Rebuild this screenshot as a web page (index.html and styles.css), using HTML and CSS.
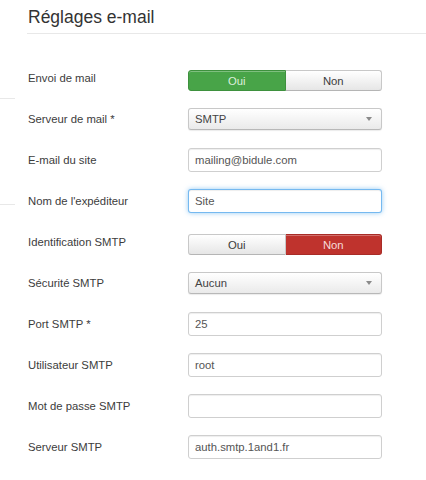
FILE: index.html
```html
<!DOCTYPE html>
<html lang="fr">
<head>
<meta charset="utf-8">
<title>Réglages e-mail</title>
<link rel="stylesheet" href="styles.css">
</head>
<body>
<div class="page">
  <aside class="side">
    <div class="side-line first"></div>
    <div class="side-line second"></div>
  </aside>
  <main class="main">
    <h2 class="title">Réglages e-mail</h2>
    <div class="form">
      <div class="row">
        <label class="lbl">Envoi de mail</label>
        <div class="toggle"><span class="tbtn yes">Oui</span><span class="tbtn">Non</span></div>
      </div>
      <div class="row">
        <label class="lbl">Serveur de mail *</label>
        <div class="select"><span>SMTP</span><span class="caret"></span></div>
      </div>
      <div class="row">
        <label class="lbl">E-mail du site</label>
        <input class="inp" type="text" value="mailing@bidule.com">
      </div>
      <div class="row">
        <label class="lbl">Nom de l'expéditeur</label>
        <input class="inp focus" type="text" value="Site">
      </div>
      <div class="row">
        <label class="lbl">Identification SMTP</label>
        <div class="toggle"><span class="tbtn">Oui</span><span class="tbtn no">Non</span></div>
      </div>
      <div class="row">
        <label class="lbl">Sécurité SMTP</label>
        <div class="select"><span>Aucun</span><span class="caret"></span></div>
      </div>
      <div class="row">
        <label class="lbl">Port SMTP *</label>
        <input class="inp" type="text" value="25">
      </div>
      <div class="row">
        <label class="lbl">Utilisateur SMTP</label>
        <input class="inp" type="text" value="root">
      </div>
      <div class="row">
        <label class="lbl">Mot de passe SMTP</label>
        <input class="inp" type="password" value="">
      </div>
      <div class="row">
        <label class="lbl">Serveur SMTP</label>
        <input class="inp" type="text" value="auth.smtp.1and1.fr">
      </div>
    </div>
  </main>
</div>
</body>
</html>
```

FILE: styles.css
```css
body {
  margin: 0;
  background: #fff;
  font-family: "Liberation Sans", Arial, Helvetica, sans-serif;
  color: #333;
}

.page {
  display: grid;
  grid-template-columns: 15px 1fr;
  column-gap: 12px;
}

.side-line {
  height: 1px;
  background: #e8e8e8;
}

.side-line.first {
  margin-top: 98px;
}

.side-line.second {
  margin-top: 105px;
}

.title {
  margin: 0;
  padding: 7px 0 6px 1px;
  font-size: 17.5px;
  line-height: 20px;
  font-weight: normal;
  color: #333;
  border-bottom: 1px solid #e8e8e8;
}

.form {
  margin-top: 23px;
}

.row {
  display: grid;
  grid-template-columns: 161px 194px;
  height: 41px;
  align-items: center;
}

.lbl {
  padding-left: 1px;
  font-size: 11.3px;
  color: #3c3c3c;
}

.toggle {
  display: flex;
  height: 21px;
  margin-top: 6px;
}

.tbtn {
  flex: 1;
  display: flex;
  align-items: center;
  justify-content: center;
  font-size: 11.3px;
  color: #3c3c3c;
  border: 1px solid #c8c8c8;
  border-bottom-color: #b5b5b5;
  background: linear-gradient(#ffffff, #e6e6e6);
  box-shadow: inset 0 1px 0 rgba(255,255,255,.3);
}

.tbtn:first-child {
  border-radius: 3px 0 0 3px;
}

.tbtn:last-child {
  border-radius: 0 3px 3px 0;
  border-left: none;
}

.tbtn.yes {
  background: #48a448;
  border-color: #3e913e;
  color: #dcefdc;
}

.tbtn.no {
  background: #bf332d;
  border-color: #a82c27;
  color: #f6dad8;
}

.select {
  box-sizing: border-box;
  height: 22px;
  display: flex;
  align-items: center;
  justify-content: space-between;
  padding: 0 9px 0 6px;
  font-size: 11.3px;
  color: #444;
  border: 1px solid #c8c8c8;
  border-bottom-color: #b8b8b8;
  border-radius: 3px;
  background: linear-gradient(#ffffff, #eaeaea);
  box-shadow: 0 1px 1px rgba(0,0,0,.08);
}

.caret {
  width: 0;
  height: 0;
  border-left: 3px solid transparent;
  border-right: 3px solid transparent;
  border-top: 4px solid #8a8a8a;
}

.inp {
  box-sizing: border-box;
  width: 194px;
  height: 24px;
  margin: 0;
  padding: 0 6px;
  font-family: "Liberation Sans", Arial, Helvetica, sans-serif;
  font-size: 11.3px;
  color: #555;
  background: #fff;
  border: 1px solid #cfcfcf;
  border-radius: 3px;
  box-shadow: inset 0 1px 1px rgba(0,0,0,.07);
  outline: none;
}

.inp.focus {
  border-color: rgba(82,168,236,.8);
  box-shadow: inset 0 1px 1px rgba(0,0,0,.07), 0 0 5px rgba(82,168,236,.6);
}
```
